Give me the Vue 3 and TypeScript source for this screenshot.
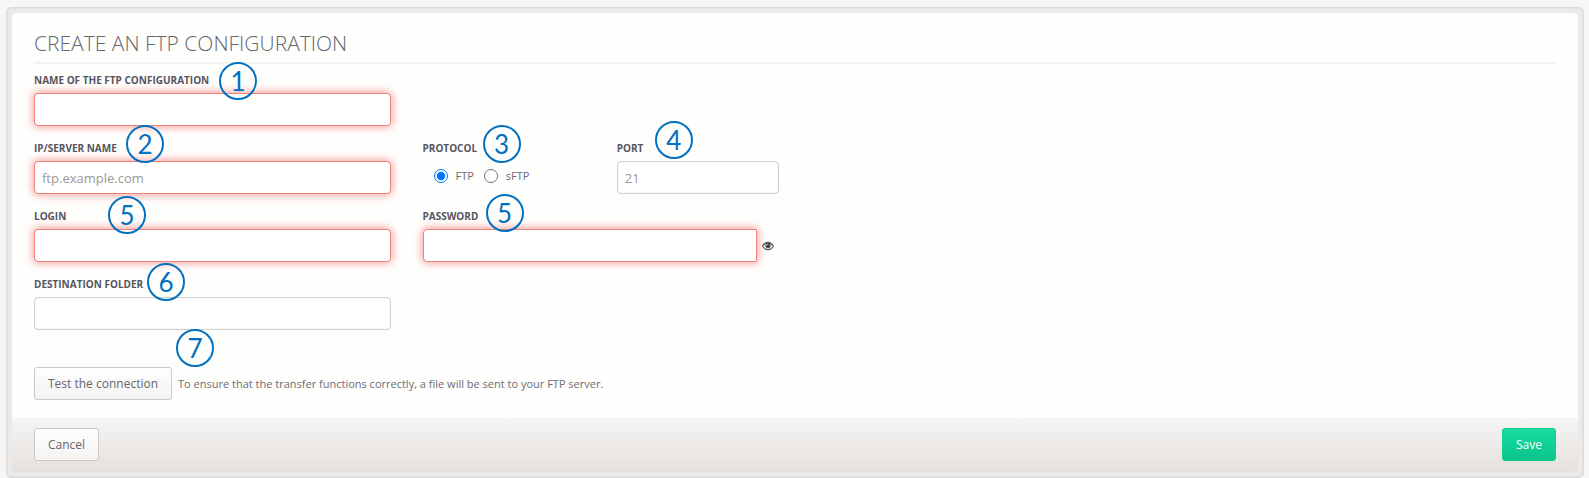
<script setup lang="ts">
import { ref } from 'vue'

const name = ref('')
const server = ref('')
const protocol = ref<'ftp' | 'sftp'>('ftp')
const port = ref('')
const login = ref('')
const password = ref('')
const folder = ref('')
const showPassword = ref(false)
</script>

<template>
  <main class="frame">
    <form class="card" @submit.prevent>
      <div class="body">
        <h1 class="title">CREATE AN FTP CONFIGURATION</h1>

        <div class="fields">
          <div class="field first">
            <label class="label" for="name">NAME OF THE FTP CONFIGURATION</label>
            <input id="name" v-model="name" class="input invalid" type="text" />
            <span class="badge b-name">1</span>
          </div>

          <div class="field first">
            <label class="label" for="server">IP/SERVER NAME</label>
            <input id="server" v-model="server" class="input invalid" type="text" placeholder="ftp.example.com" />
            <span class="badge b-server">2</span>
          </div>
          <div class="field narrow" role="radiogroup" aria-labelledby="protocol">
            <span id="protocol" class="label">PROTOCOL</span>
            <div class="radios">
              <label class="radio"><input v-model="protocol" type="radio" name="protocol" value="ftp" />FTP</label>
              <label class="radio"><input v-model="protocol" type="radio" name="protocol" value="sftp" />sFTP</label>
            </div>
            <span class="badge b-protocol">3</span>
          </div>
          <div class="field narrow">
            <label class="label" for="port">PORT</label>
            <input id="port" v-model="port" class="input" type="text" placeholder="21" />
            <span class="badge b-port">4</span>
          </div>

          <div class="field first">
            <label class="label" for="login">LOGIN</label>
            <input id="login" v-model="login" class="input invalid" type="text" />
            <span class="badge b-login">5</span>
          </div>
          <div class="field">
            <label class="label" for="password">PASSWORD</label>
            <div class="password">
              <input id="password" v-model="password" class="input invalid joined" :type="showPassword ? 'text' : 'password'" />
              <button class="eye" type="button" aria-label="Show password" @click="showPassword = !showPassword">
                <svg viewBox="0 0 12 10" width="12" height="10">
                  <path d="M.6 5C1.900 2.700 3.800 1.300 6 1.300S10.100 2.700 11.400 5C10.100 7.300 8.200 8.600 6 8.600S1.900 7.300.6 5Z" fill="#fff" stroke="#555" stroke-width="1.100" />
                  <path d="M1 4.500Q6-1.500 11 4.500" fill="none" stroke="#555" stroke-width="1" />
                  <circle cx="6" cy="4.500" r="2.700" fill="#484848" />
                  <path d="M4.600 4.500Q4.600 3.100 6 3.100" fill="none" stroke="#ddd" stroke-width=".8" />
                </svg>
              </button>
            </div>
            <span class="badge b-password">5</span>
          </div>

          <div class="field first">
            <label class="label" for="folder">DESTINATION FOLDER</label>
            <input id="folder" v-model="folder" class="input" type="text" />
            <span class="badge b-folder">6</span>
          </div>
        </div>

        <div class="test">
          <button class="btn" type="button">Test the connection</button>
          <span class="hint">To ensure that the transfer functions correctly, a file will be sent to your FTP server.</span>
          <span class="badge b-test">7</span>
        </div>
      </div>

      <footer class="footer">
        <button class="btn" type="button">Cancel</button>
        <button class="btn primary" type="submit">Save</button>
      </footer>
    </form>
  </main>
</template>

<style>
body {
  margin: 0;
  background: #f7f6f5;
}
</style>

<style scoped>
.frame,
.frame * {
  box-sizing: border-box;
}
.frame {
  margin: 7px 5px 0 6px;
  padding: 5px;
  border: 1px solid #dcdbda;
  border-radius: 5px;
  background: #ebeae9;
  box-shadow: inset 0 0 2px #d4d3d2;
  font-family: "Open Sans", "Noto Sans", sans-serif;
  color: #6c6c74;
}
.card {
  border-radius: 4px;
  background: #fefefd;
  overflow: hidden;
}
.body {
  padding: 16px 22px 18px;
}
.title {
  margin: 0;
  height: 35px;
  border-bottom: 2px solid #f3f3f2;
  font-size: 21px;
  line-height: 28px;
  font-weight: 300;
  color: #66666e;
}
.fields {
  display: grid;
  grid-template-columns: repeat(8, minmax(0, 1fr));
  column-gap: 32px;
  row-gap: 11px;
  padding-top: 5px;
}
.field {
  position: relative;
  grid-column: span 2;
}
.field.first {
  grid-column: 1 / span 2;
}
.field.narrow {
  grid-column: span 1;
}
.label {
  display: block;
  height: 24px;
  font-size: 10px;
  line-height: 22px;
  font-weight: 700;
  color: #55555d;
  white-space: nowrap;
}
.input {
  display: block;
  width: 100%;
  height: 33px;
  padding: 0 7px;
  border: 1px solid #cfcfcf;
  border-radius: 4px;
  outline: 0;
  background: #fff;
  box-shadow: inset 0 0 1px #ccc;
  font-family: inherit;
  font-size: 13px;
  color: #555;
}
.input::placeholder {
  color: #999;
  opacity: 1;
}
.invalid {
  border-color: #ee827c;
  box-shadow: 0 0 8px 1px #f49c96;
}
.password {
  display: flex;
  align-items: center;
}
.joined {
  flex: 1;
  border-radius: 4px 0 0 4px;
}
.eye {
  display: flex;
  width: 22px;
  padding: 0 5px;
  border: 0;
  background: none;
}
.radios {
  display: flex;
  gap: 10px;
  padding: 5px 0 0 11px;
}
.radio {
  display: flex;
  align-items: center;
  font-size: 11px;
  line-height: 20px;
}
.radio input {
  width: 14px;
  height: 14px;
  margin: 0 8px 0 0;
  accent-color: #0075ff;
}
.test {
  position: relative;
  display: flex;
  align-items: center;
  gap: 6px;
  margin-top: 37px;
}
.btn {
  height: 33px;
  padding: 0 13px 1px;
  border: 1px solid #cbc8c6;
  border-radius: 3px;
  background: linear-gradient(#fefefe, #f4f3f2);
  font-family: inherit;
  font-size: 12px;
  color: #66666e;
}
.primary {
  border-color: #12c98f;
  background: linear-gradient(#17dda1, #0bc48b);
  color: #fff;
}
.hint {
  font-size: 11px;
}
.footer {
  display: flex;
  justify-content: space-between;
  padding: 10px 22px 11px;
  background: linear-gradient(#f6f5f4, #e4e0dd);
}
.badge {
  position: absolute;
  width: 38px;
  height: 38px;
  border: 2px solid #0070c0;
  border-radius: 50%;
  font-family: Lato, "Noto Sans", sans-serif;
  font-size: 26px;
  line-height: 34px;
  text-align: center;
  color: #0070c0;
  pointer-events: none;
}
.b-name { left: 185px; top: -7px; }
.b-server { left: 92px; top: -12px; }
.b-protocol { left: 60px; top: -12px; }
.b-port { left: 38px; top: -16px; }
.b-login { left: 74px; top: -9px; }
.b-password { left: 63px; top: -11px; }
.b-folder { left: 113px; top: -10px; }
.b-test { left: 142px; top: -38px; }
</style>
